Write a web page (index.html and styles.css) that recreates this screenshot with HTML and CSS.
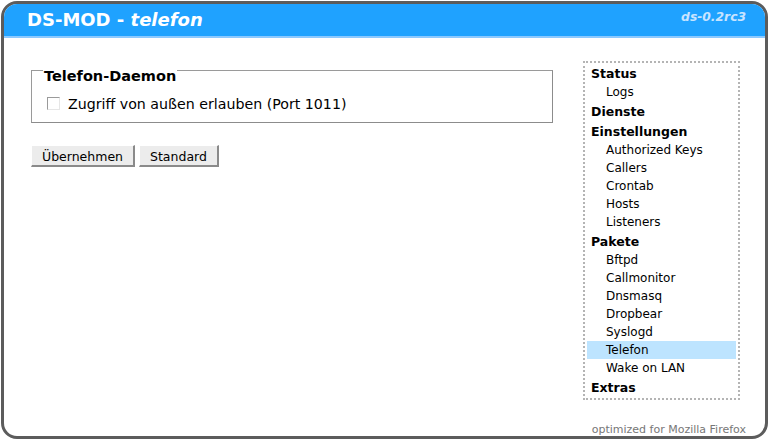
FILE: index.html
```html
<!DOCTYPE html>
<html lang="de">
<head>
<meta charset="utf-8">
<title>DS-MOD - telefon</title>
<link rel="stylesheet" href="styles.css">
</head>
<body>
<div class="frame">
  <div class="header">
    <div class="title">DS-MOD - <i>telefon</i></div>
    <div class="version">ds-0.2rc3</div>
  </div>
  <div class="content">
    <div class="main">
      <fieldset class="group">
        <legend>Telefon-Daemon</legend>
        <label class="check"><span class="box"></span>Zugriff von außen erlauben (Port 1011)</label>
      </fieldset>
      <div class="buttons">
        <button class="btn">Übernehmen</button>
        <button class="btn">Standard</button>
      </div>
    </div>
    <div class="menu">
      <div class="head">Status</div>
      <div class="item">Logs</div>
      <div class="head">Dienste</div>
      <div class="head">Einstellungen</div>
      <div class="item">Authorized Keys</div>
      <div class="item">Callers</div>
      <div class="item">Crontab</div>
      <div class="item">Hosts</div>
      <div class="item">Listeners</div>
      <div class="head">Pakete</div>
      <div class="item">Bftpd</div>
      <div class="item">Callmonitor</div>
      <div class="item">Dnsmasq</div>
      <div class="item">Dropbear</div>
      <div class="item">Syslogd</div>
      <div class="item active">Telefon</div>
      <div class="item">Wake on LAN</div>
      <div class="head">Extras</div>
    </div>
  </div>
  <div class="footer">optimized for Mozilla Firefox</div>
</div>
</body>
</html>
```

FILE: styles.css
```css
html, body {
  margin: 0;
  padding: 0;
  background: #fff;
}
body {
  padding: 1px 2px 2px 1px;
  font-family: "DejaVu Sans", Verdana, sans-serif;
  color: #000;
}
.frame {
  box-sizing: border-box;
  width: 767px;
  height: 438px;
  border: 3px solid #5c5c5c;
  border-radius: 16px;
  overflow: hidden;
  display: flex;
  flex-direction: column;
}
.header {
  height: 32px;
  background: #1fa2ff;
  border-bottom: 2px solid #8cc9ff;
  display: flex;
  align-items: center;
  justify-content: space-between;
  padding: 0 19px 0 23px;
  flex: none;
}
.title {
  color: #fff;
  font-weight: bold;
  font-size: 18px;
  padding-bottom: 1px;
}
.version {
  color: #c8e4ff;
  font-weight: bold;
  font-style: italic;
  font-size: 12.3px;
  padding-bottom: 6px;
}
.content {
  flex: 1;
  display: flex;
  justify-content: space-between;
  padding: 17px 25px 0 27px;
}
.main {
  width: 522px;
}
.group {
  margin: 0;
  padding: 10px 10px 9px 15px;
  border: 1px solid #8c8c8c;
  border-top-color: #9a9a9a;
  border-left-color: #9a9a9a;
}
.group legend {
  font-weight: bold;
  font-size: 14.5px;
  line-height: 17px;
  padding: 13px 1px 0 1px;
  margin-left: -4px;
}
.check {
  display: flex;
  align-items: center;
  font-size: 14.2px;
  line-height: 18px;
}
.box {
  width: 11px;
  height: 11px;
  border: 1px solid #9a9a9a;
  border-right-color: #e6e6e6;
  border-bottom-color: #e6e6e6;
  background: #fff;
  margin-right: 8px;
  margin-top: -1px;
}
.buttons {
  display: flex;
  gap: 4px;
  margin-top: 22px;
}
.btn {
  font-family: "DejaVu Sans", Verdana, sans-serif;
  font-size: 12.5px;
  color: #000;
  background: #ececec;
  border: 1px solid #fff;
  border-right: 2px solid #8a8a8a;
  border-bottom: 2px solid #8a8a8a;
  padding: 2px 10px 1px 10px;
  height: 22px;
  line-height: 17px;
  margin: 0;
}
.menu {
  width: 157px;
  margin-top: 6px;
  border: 2px dotted #b4b4b4;
  padding: 2px 0 1px;
  box-sizing: border-box;
  align-self: flex-start;
  font-size: 12px;
}
.head {
  font-weight: bold;
  font-size: 12.5px;
  line-height: 18px;
  padding-left: 6px;
  margin-top: 2px;
}
.head:first-child {
  margin-top: 0;
}
.item {
  line-height: 18px;
  padding-left: 19px;
  margin: 0 2px;
}
.item.active {
  background: #bde4ff;
}
.footer {
  flex: none;
  text-align: right;
  font-size: 11px;
  color: #777;
  padding: 0 19px 0 0;
  line-height: 13px;
}
```
